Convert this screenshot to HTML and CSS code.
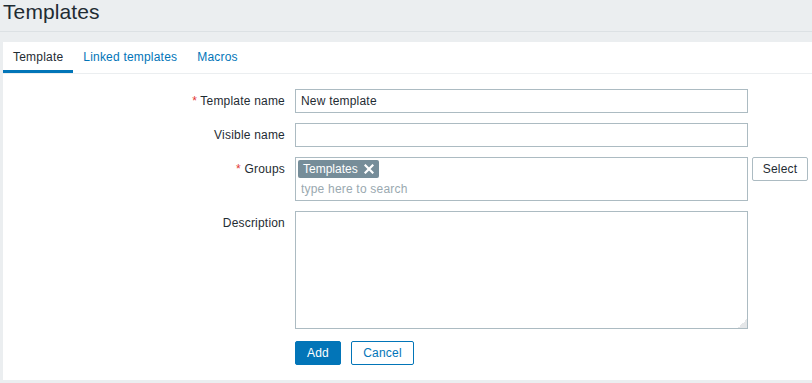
FILE: index.html
```html
<!DOCTYPE html>
<html lang="en">
<head>
<meta charset="utf-8">
<title>Templates</title>
<link rel="stylesheet" href="styles.css">
</head>
<body>
<header class="page-header">
  <h1 class="page-title">Templates</h1>
</header>
<main class="panel">
  <ul class="tabs">
    <li class="tab tab-active"><a href="#">Template</a></li>
    <li class="tab"><a href="#">Linked templates</a></li>
    <li class="tab"><a href="#">Macros</a></li>
  </ul>
  <form class="form">
    <div class="row">
      <label class="label"><span class="req">*</span> Template name</label>
      <div class="field"><input class="text" type="text" value="New template"></div>
    </div>
    <div class="row">
      <label class="label">Visible name</label>
      <div class="field"><input class="text" type="text" value=""></div>
    </div>
    <div class="row">
      <label class="label"><span class="req">*</span> Groups</label>
      <div class="field field-ms">
        <div class="multiselect">
          <div class="tags">
            <span class="tag">Templates<span class="tag-x"><svg width="10" height="10" viewBox="0 0 10 10"><path d="M1.5 1.5 L8.5 8.5 M8.5 1.5 L1.5 8.5" stroke="#fff" stroke-width="2.2" stroke-linecap="square"/></svg></span></span>
          </div>
          <input class="ms-input" type="text" placeholder="type here to search">
        </div>
        <button type="button" class="btn-alt">Select</button>
      </div>
    </div>
    <div class="row">
      <label class="label">Description</label>
      <div class="field">
        <div class="ta-wrap">
          <textarea class="textarea"></textarea>
          <span class="grip"></span>
        </div>
      </div>
    </div>
    <div class="row row-buttons">
      <div class="label"></div>
      <div class="field buttons">
        <button type="button" class="btn-primary">Add</button>
        <button type="button" class="btn-secondary">Cancel</button>
      </div>
    </div>
  </form>
</main>
</body>
</html>
```

FILE: styles.css
```css
* { box-sizing: border-box; }
html, body {
  margin: 0;
  padding: 0;
}
body {
  background: #ebeef0;
  font-family: "Liberation Sans", Arial, sans-serif;
  font-size: 12px;
  letter-spacing: 0.2px;
  color: #1f2c33;
  width: 812px;
  height: 383px;
  overflow: hidden;
}
input, textarea, button { letter-spacing: 0.2px; }
.page-header {
  height: 32px;
  border-bottom: 1px solid #dce1e4;
  padding-left: 3px;
}
.page-title {
  margin: 0;
  font-size: 21px;
  font-weight: normal;
  line-height: 24px;
  letter-spacing: 0.1px;
  color: #1f2c33;
}
.panel {
  margin: 10px 0 0 3px;
  background: #fff;
  height: 338px;
}
.tabs {
  list-style: none;
  margin: 0;
  padding: 0;
  display: flex;
  border-bottom: 1px solid #ebeef0;
}
.tab a {
  display: block;
  padding: 8px 10px 6px;
  line-height: 14px;
  color: #0275b8;
  text-decoration: none;
  border-bottom: 3px solid transparent;
}
.tab-active a {
  color: #1f2c33;
  border-bottom-color: #0275b8;
}
.form {
  padding-top: 15px;
  display: flex;
  flex-direction: column;
  gap: 10px;
}
.row {
  display: flex;
  gap: 10px;
  align-items: flex-start;
}
.row-buttons { margin-top: 2px; }
.label {
  width: 282px;
  flex: none;
  text-align: right;
  line-height: 24px;
  color: #1f2c33;
}
.req { color: #e33734; }
.field { width: 453px; flex: none; }
.text {
  width: 453px;
  height: 24px;
  border: 1px solid #acbbc2;
  padding: 0 5px;
  font: 12px "Liberation Sans", Arial, sans-serif;
  color: #1f2c33;
  outline: none;
  display: block;
}
.field-ms {
  display: flex;
  gap: 4px;
  width: auto;
}
.multiselect {
  width: 453px;
  height: 44px;
  border: 1px solid #acbbc2;
  padding: 2px 2px 0;
}
.tags { display: flex; height: 18px; }
.tag {
  display: inline-flex;
  align-items: center;
  background: #768d99;
  color: #fff;
  height: 18px;
  padding: 0 5px;
  border-radius: 2px;
  line-height: 18px;
  letter-spacing: 0;
}
.tag-x {
  display: inline-flex;
  margin-left: 6px;
}
.ms-input {
  display: block;
  border: 0;
  outline: none;
  width: 100%;
  height: 20px;
  padding: 0 3px;
  margin-top: 1px;
  font: 12px "Liberation Sans", Arial, sans-serif;
  color: #1f2c33;
}
.ms-input::placeholder { color: #9aa9b0; }
.btn-alt {
  width: 56px;
  height: 24px;
  background: #fff;
  border: 1px solid #acbbc2;
  border-radius: 2px;
  font: 12px "Liberation Sans", Arial, sans-serif;
  color: #1f2c33;
  padding: 0;
}
.ta-wrap { position: relative; width: 453px; height: 118px; }
.textarea {
  display: block;
  width: 453px;
  height: 118px;
  border: 1px solid #acbbc2;
  resize: none;
  outline: none;
  margin: 0;
  font: 12px "Liberation Sans", Arial, sans-serif;
}
.grip {
  position: absolute;
  right: 1px;
  bottom: 1px;
  width: 9px;
  height: 9px;
  background: linear-gradient(135deg, transparent 50%, #e4e6e8 50%);
}
.buttons { display: flex; gap: 10px; }
.btn-primary {
  width: 46px;
  height: 24px;
  background: #0275b8;
  border: 1px solid #0275b8;
  border-radius: 2px;
  color: #fff;
  font: 12px "Liberation Sans", Arial, sans-serif;
  padding: 0;
}
.btn-secondary {
  width: 63px;
  height: 24px;
  background: #fff;
  border: 1px solid #0275b8;
  border-radius: 2px;
  color: #0275b8;
  font: 12px "Liberation Sans", Arial, sans-serif;
  padding: 0;
}
```
